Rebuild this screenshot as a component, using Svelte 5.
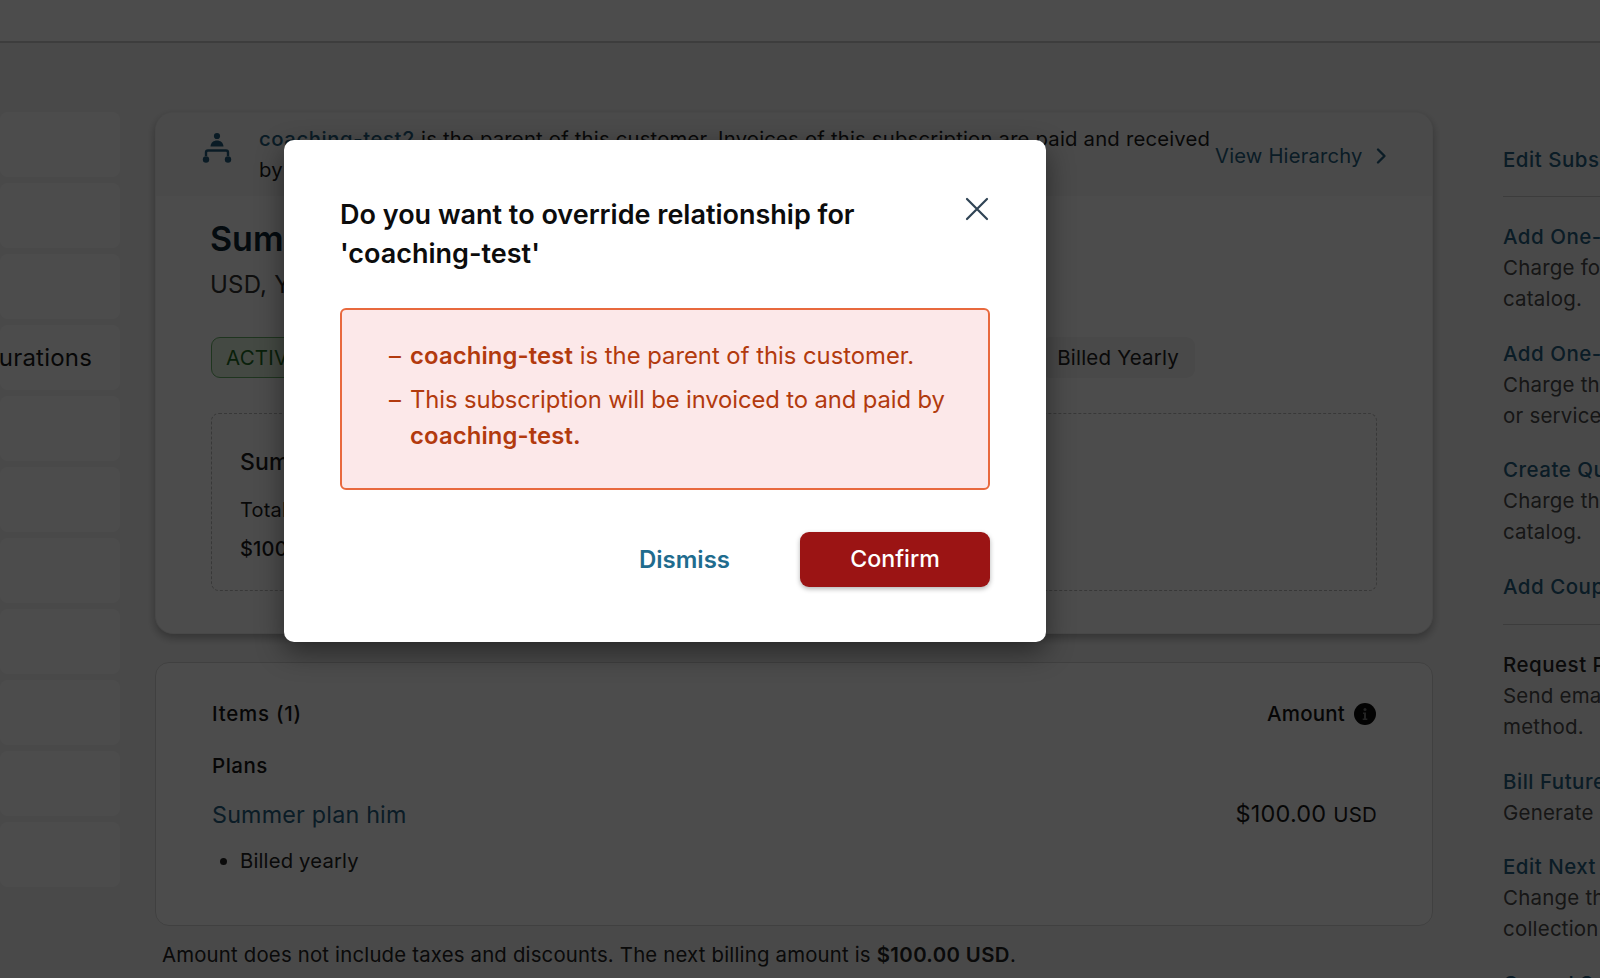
<script>
  const sidebar = ['', '', '', 'Configurations', '', '', '', '', '', '', ''];
  const actionsA = [{ head: 'Edit Subscription', lines: [] }];
  const actionsB = [
    { head: 'Add One-time Charge', lines: ['Charge for an item not in your', 'catalog.'] },
    { head: 'Add One-time Invoice', lines: ['Charge the customer for a product', 'or service.'] },
    { head: 'Create Quote', lines: ['Charge the customer from your', 'catalog.'] },
    { head: 'Add Coupon', lines: [] }
  ];
  const actionsC = [
    { head: 'Request Payment Method', lines: ['Send email to update the payment', 'method.'], plain: true },
    { head: 'Bill Future Renewals', lines: ['Generate an advance invoice.'] },
    { head: 'Edit Next Billing Date', lines: ['Change the next billing and', 'collection date.'] },
    { head: 'Cancel Subscription', lines: [] }
  ];
  const groups = [actionsA, actionsB, actionsC];
</script>

<div class="page">
  <header class="topbar"></header>
  <div class="layout">
    <nav class="sidebar">
      {#each sidebar as label}
        <div class="side-item">{label}</div>
      {/each}
    </nav>

    <main class="main">
      <section class="card">
        <div class="banner">
          <svg class="tree" width="34" height="34" viewBox="0 0 34 34" aria-hidden="true">
            <circle cx="17" cy="5" r="3.1" />
            <path d="M10.500 15.500c.3-4 3-6 6.500-6s6.200 2 6.500 6z" />
            <path class="line" d="M6 25v-3.500a2 2 0 0 1 2-2h18a2 2 0 0 1 2 2V25" />
            <circle cx="6" cy="28.500" r="3.200" />
            <circle cx="28" cy="28.500" r="3.200" />
          </svg>
          <p class="banner-text"><span class="link med">coaching-test2</span> is the parent of this customer. Invoices of this subscription are paid and received by coaching-test2.</p>
          <span class="view link">View Hierarchy
            <svg width="12" height="18" viewBox="0 0 12 18" aria-hidden="true"><path d="M3 2.500l6.500 6.500-6.500 6.500" fill="none" stroke="currentColor" stroke-width="2.400" stroke-linecap="round" stroke-linejoin="round" /></svg>
          </span>
        </div>
        <div class="card-body">
          <h1>Summer plan him</h1>
          <p class="sub">USD, Yearly</p>
          <div class="badges">
            <span class="badge active">ACTIVE</span>
            <span class="badge billed">Billed Yearly</span>
          </div>
          <div class="dashed">
            <h2>Summary</h2>
            <p class="total">Total</p>
            <p class="value">$100.00</p>
          </div>
        </div>
      </section>

      <section class="items">
        <div class="items-head">
          <span class="strong wide">Items (1)</span>
          <span class="strong amount">Amount
            <svg width="22" height="22" viewBox="0 0 22 22" aria-hidden="true"><circle cx="11" cy="11" r="11" fill="#0b0b0b" /><circle cx="11" cy="6.500" r="1.500" fill="#777" /><path d="M9 9.500h3v6h1.300v1.500H8.700v-1.500H10v-4.500H9z" fill="#777" /></svg>
          </span>
        </div>
        <div class="strong plans">Plans</div>
        <div class="plan-row">
          <span class="plan-name link">Summer plan him</span>
          <span class="price">$100.00 <small>USD</small></span>
        </div>
        <ul><li>Billed yearly</li></ul>
      </section>
      <p class="note">Amount does not include taxes and discounts. The next billing amount is <b>$100.00 USD</b>.</p>
    </main>

    <aside class="actions">
      {#each groups as group, g}
        {#if g > 0}<hr class:late={g === 2} />{/if}
        <div class="group">
          {#each group as action}
            <div>
              <div class="action-head" class:plain={action.plain}>{action.head}</div>
              {#each action.lines as line}
                <div class="action-line">{line}</div>
              {/each}
            </div>
          {/each}
        </div>
      {/each}
    </aside>
  </div>

  <div class="overlay">
    <div class="modal" role="dialog">
      <div class="modal-head">
        <h3>Do you want to override relationship for 'coaching-test'</h3>
        <svg class="close" width="24" height="24" viewBox="0 0 24 24" aria-hidden="true"><path d="M2 2l20 20M22 2L2 22" stroke="#2f4354" stroke-width="2.200" stroke-linecap="round" /></svg>
      </div>
      <div class="alert">
        <div class="alert-row"><span class="dash">–</span><span><b>coaching-test</b> is the parent of this customer.</span></div>
        <div class="alert-row tight"><span class="dash">–</span><span>This subscription will be invoiced to and paid by <b>coaching-test.</b></span></div>
      </div>
      <div class="modal-actions">
        <span class="dismiss">Dismiss</span>
        <span class="confirm">Confirm</span>
      </div>
    </div>
  </div>
</div>

<style>
  :global(body) { margin: 0; background: #f6f6f6; }
  .page {
    position: relative;
    width: 1600px;
    height: 978px;
    overflow: hidden;
    background: #f6f6f6;
    font-family: Inter, "Liberation Sans", sans-serif;
    font-size: 20px;
    line-height: 31px;
    color: #1c1c1c;
    letter-spacing: 0.2px;
  }
  p, h1, h2, h3 { margin: 0; }
  .topbar { height: 41px; border-bottom: 2px solid #cccccc; background: #fff; }
  .layout {
    display: grid;
    grid-template-columns: 120px 1278px 400px;
    column-gap: 35px;
    padding-top: 69px;
  }
  .sidebar { display: flex; flex-direction: column; gap: 6px; }
  .side-item {
    height: 65px;
    background: #ffffff;
    border-radius: 8px;
    display: flex;
    align-items: center;
    justify-content: flex-end;
    padding: 0 28px 0 0;
    box-sizing: border-box;
    font-size: 24px;
    white-space: nowrap;
    color: #1a1a1a;
  }
  .main { min-width: 0; }
  .card {
    height: 522px;
    box-sizing: border-box;
    border: 1px solid #f0f0f0;
    border-radius: 18px;
    background: #fff;
    box-shadow: 0 4px 10px rgba(0, 0, 0, .3);
    overflow: hidden;
  }
  .banner {
    height: 83px;
    background: #f7f8f8;
    display: flex;
    align-items: flex-start;
    box-sizing: border-box;
    padding: 10px 0 0 44px;
    position: relative;
  }
  .tree { fill: #245d7c; margin-top: 8px; flex: none; }
  .tree .line { fill: none; stroke: #245d7c; stroke-width: 2.400; }
  .banner-text { width: 955px; margin-left: 25px; font-size: 20.300px; flex: none; }
  .med { font-weight: 500; letter-spacing: 0.6px; }
  .link { color: #25607f; }
  .view { display: inline-flex; align-items: center; gap: 12px; margin: 17px 0 0 1px; white-space: nowrap; font-size: 20.200px; }
  .card-body { padding: 21px 55px 0; }
  h1 { font-size: 34px; line-height: 44px; font-weight: 600; color: #102533; letter-spacing: 0; margin-left: -1px; }
  .sub { font-size: 24px; line-height: 34px; margin: 7px 0 0 -1px; color: #333; }
  .badges { display: flex; justify-content: space-between; padding-right: 182px; margin-top: 35px; }
  .badge {
    height: 41px;
    box-sizing: border-box;
    display: inline-flex;
    align-items: center;
    padding: 0 14px;
    border-radius: 9px;
    background: #f3f3f3;
    font-size: 20.500px;
    color: #222;
  }
  .billed { padding-left: 16px; padding-right: 16px; }
  .active { background: #e3f5e0; border: 1px solid #69b36a; color: #1f6b25; width: 120px; }
  .dashed {
    margin-top: 35px;
    height: 178px;
    box-sizing: border-box;
    border: 1px dashed #bcbcbc;
    border-radius: 8px;
    padding: 33px 28px;
  }
  h2 { font-size: 23px; line-height: 31px; font-weight: 500; }
  .total { margin-top: 17px; }
  .value { margin-top: 8px; font-weight: 500; }
  .items {
    margin-top: 28px;
    height: 264px;
    box-sizing: border-box;
    border: 1.500px solid #d8d8d8;
    border-radius: 14px;
    background: #fff;
    padding: 35px 56px 0 56px;
  }
  .items-head, .plan-row { display: flex; justify-content: space-between; align-items: center; }
  .strong { font-weight: 500; font-size: 20.500px; color: #141414; }
  .wide { letter-spacing: 0.75px; }
  .amount { display: inline-flex; align-items: center; gap: 9px; }
  .plans { margin-top: 21px; letter-spacing: 0.5px; }
  .plan-row { margin-top: 17px; }
  .plan-name { font-size: 23.300px; }
  .price { font-size: 23.500px; color: #1a1a1a; margin-right: -1px; }
  .price small { font-size: 20.500px; }
  ul { margin: 15px 0 0; padding: 0 0 0 28px; }
  li { font-size: 20.200px; color: #222; }
  .note { margin: 13px 0 0 7px; font-size: 20.330px; white-space: nowrap; color: #222; }
  .note b { font-weight: 600; letter-spacing: 0.4px; }
  .actions { margin-left: 35px; padding-top: 32px; white-space: nowrap; }
  .group { display: flex; flex-direction: column; gap: 23.500px; }
  hr { margin: 21px 0 24px; border: 0; border-top: 1px solid #c8c8c8; }
  hr.late { margin: 22.500px 0 24px; }
  .action-head { color: #25607f; font-weight: 500; font-size: 20.500px; letter-spacing: 0.5px; }
  .action-head.plain { color: #222; }
  .action-line { color: #4a4a4a; font-size: 20.500px; }
  .overlay {
    position: absolute;
    inset: 0;
    background: rgba(0, 0, 0, .7);
  }
  .modal {
    position: absolute;
    left: 284px;
    top: 140px;
    width: 762px;
    height: 502px;
    box-sizing: border-box;
    padding: 56px 56px 0;
    background: #fff;
    border-radius: 10px;
    box-shadow: 0 10px 28px rgba(0, 0, 0, .45);
  }
  .modal-head { display: flex; justify-content: space-between; align-items: flex-start; height: 77px; }
  h3 { font-size: 27px; line-height: 38.500px; font-weight: 600; width: 560px; color: #0c0c0c; letter-spacing: 0; }
  .close { margin: 1px 1px 0 0; }
  .alert {
    margin-top: 35px;
    height: 182px;
    box-sizing: border-box;
    border: 2px solid #e8693e;
    border-radius: 6px;
    background: #fce8e9;
    padding: 28px 30px 0 47px;
    color: #b23a0e;
    font-size: 23.800px;
    line-height: 36px;
    letter-spacing: 0;
  }
  .alert-row { display: flex; gap: 8px; margin-bottom: 8px; }
  .tight { letter-spacing: -0.1px; }
  .alert b { font-weight: 600; letter-spacing: 0.15px; }
  .dash { flex: none; width: 13px; }
  .modal-actions { display: flex; justify-content: flex-end; align-items: center; margin-top: 42px; gap: 70px; }
  .dismiss { color: #1f6c8e; font-size: 24px; font-weight: 600; letter-spacing: 0; }
  .confirm {
    width: 190px;
    height: 55px;
    display: flex;
    align-items: center;
    justify-content: center;
    background: #9b1414;
    color: #fff;
    font-size: 23.200px;
    font-weight: 500;
    border-radius: 9px;
    letter-spacing: 0;
    box-shadow: 0 2px 5px rgba(0, 0, 0, .3);
  }
</style>
